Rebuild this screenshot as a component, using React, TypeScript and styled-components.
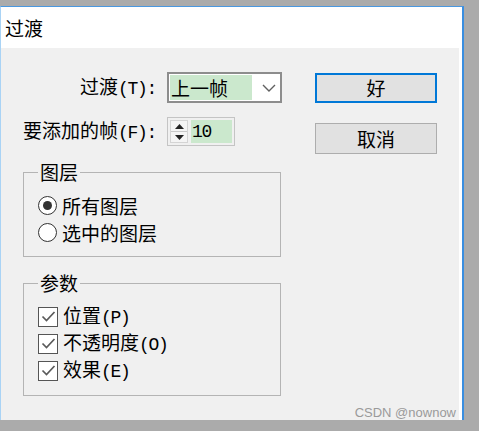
import React from 'react'
import styled, { createGlobalStyle } from 'styled-components'

const GlobalStyle = createGlobalStyle`
  html, body {
    margin: 0;
    padding: 0;
    background: #ababab;
  }
  body {
    font-family: "Noto Sans CJK SC", "Noto Sans", sans-serif;
    color: #000;
  }
`

const App = () => {
  return (
    <>
      <GlobalStyle />
      <Page>
        <Window>
          <TitleBar>过渡</TitleBar>
          <Content>
            <LeftCol>
              <FormRow h={31}>
                <Label>过渡<Ascii>(T):</Ascii></Label>
                <Select>
                  <SelectValue>上一帧</SelectValue>
                  <Chevron>
                    <svg width="14" height="8" viewBox="0 0 14 8">
                      <polyline points="1,1 7,7 13,1" fill="none" stroke="#606060" strokeWidth="1.4" />
                    </svg>
                  </Chevron>
                </Select>
              </FormRow>
              <FormRow h={29} mt={14}>
                <Label>要添加的帧<Ascii>(F):</Ascii></Label>
                <Spinner>
                  <SpinButtons>
                    <SpinHalf>
                      <svg width="9" height="5" viewBox="0 0 9 5">
                        <polygon points="0,5 4.5,0 9,5" fill="#222" />
                      </svg>
                    </SpinHalf>
                    <SpinHalf>
                      <svg width="9" height="5" viewBox="0 0 9 5">
                        <polygon points="0,0 4.5,5 9,0" fill="#222" />
                      </svg>
                    </SpinHalf>
                  </SpinButtons>
                  <SpinField><Ascii>10</Ascii></SpinField>
                </Spinner>
              </FormRow>

              <Group mt={16}>
                <Legend>图层</Legend>
                <OptionRow>
                  <Radio>
                    <Dot />
                  </Radio>
                  所有图层
                </OptionRow>
                <OptionRow>
                  <Radio />
                  选中的图层
                </OptionRow>
              </Group>

              <Group mt={16} pb={11}>
                <Legend>参数</Legend>
                <OptionRow>
                  <CheckBox>
                    <CheckMark />
                  </CheckBox>
                  <span>位置<Ascii>(P)</Ascii></span>
                </OptionRow>
                <OptionRow>
                  <CheckBox>
                    <CheckMark />
                  </CheckBox>
                  <span>不透明度<Ascii>(O)</Ascii></span>
                </OptionRow>
                <OptionRow>
                  <CheckBox>
                    <CheckMark />
                  </CheckBox>
                  <span>效果<Ascii>(E)</Ascii></span>
                </OptionRow>
              </Group>
            </LeftCol>

            <RightCol>
              <Button primary>好</Button>
              <Button>取消</Button>
            </RightCol>

            <Watermark>CSDN @nownow</Watermark>
          </Content>
        </Window>
      </Page>
    </>
  )
}

const CheckMark = () => (
  <svg width="15" height="13" viewBox="0 0 15 13">
    <polyline points="1.5,6.5 5.5,10.5 13.5,2" fill="none" stroke="#5a5a5a" strokeWidth="1.7" />
  </svg>
)

export default App

const Page = styled.div`
  height: 431px;
  padding-top: 6px;
  box-sizing: border-box;
  overflow: hidden;
`
const Window = styled.div`
  width: 464px;
  height: 414px;
  box-sizing: border-box;
  background: #fff;
  border-top: 1px solid #4a98e0;
  border-right: 2px solid #3a8ee0;
  border-left: 1px solid #a9d3f5;
  display: flex;
  flex-direction: column;
`
const TitleBar = styled.div`
  height: 41px;
  padding-left: 4px;
  display: flex;
  align-items: center;
  font-size: 19px;
  line-height: 22px;
`
const Content = styled.div`
  flex: 1;
  margin-right: 3px;
  background: #f0f0f0;
  position: relative;
  display: grid;
  grid-template-columns: 282px 122px;
  column-gap: 32px;
  align-items: start;
  align-content: start;
  padding-top: 24px;
`
const Ascii = styled.span`
  font-family: "Liberation Mono", "Courier New", monospace;
  font-size: 18px;
  letter-spacing: -1.3px;
`
const LeftCol = styled.div`
  display: flex;
  flex-direction: column;
`
const FormRow = styled.div<{ h: number; mt?: number }>`
  display: grid;
  grid-template-columns: 156px auto;
  column-gap: 10px;
  align-items: center;
  height: ${({ h }) => h}px;
  margin-top: ${({ mt }) => mt || 0}px;
`
const Label = styled.div`
  text-align: right;
  font-size: 19px;
  line-height: 20px;
  white-space: nowrap;
  padding-right: 1px;
`
const Select = styled.div`
  width: 115px;
  height: 31px;
  box-sizing: border-box;
  border: 2px solid #8d8d8d;
  background: #fff;
  padding: 1px;
  display: flex;
`
const SelectValue = styled.div`
  width: 81px;
  background: #cbe8cd;
  padding-left: 1px;
  display: flex;
  align-items: center;
  font-size: 19px;
  line-height: 20px;
`
const Chevron = styled.div`
  flex: 1;
  display: flex;
  align-items: center;
  justify-content: center;
  padding-left: 6px;
`
const Spinner = styled.div`
  width: 68px;
  height: 29px;
  box-sizing: border-box;
  border: 1px solid #c4c4c4;
  padding: 2px;
  display: flex;
  gap: 3px;
`
const SpinButtons = styled.div`
  width: 18px;
  display: flex;
  flex-direction: column;
  border: 1px solid #d4d4d4;
  box-sizing: border-box;
  background: #f4f4f4;
`
const SpinHalf = styled.div`
  flex: 1;
  display: flex;
  align-items: center;
  justify-content: center;
  & + & {
    border-top: 1px solid #c8c8c8;
  }
`
const SpinField = styled.div`
  flex: 1;
  background: #cbe8cd;
  padding-left: 1px;
  display: flex;
  align-items: center;
  line-height: 20px;
`
const Group = styled.fieldset<{ mt: number; pb?: number }>`
  margin: ${({ mt }) => mt}px 0 0 22px;
  width: 258px;
  box-sizing: border-box;
  border: 1px solid #b4b4b4;
  padding: 10px 0 ${({ pb }) => pb ?? 10}px 14px;
  min-width: 0;
`
const Legend = styled.legend`
  padding: 0 2px;
  font-size: 19px;
  line-height: 20px;
`
const OptionRow = styled.div`
  display: flex;
  align-items: center;
  gap: 5px;
  height: 27px;
  font-size: 19px;
  line-height: 20px;
`
const Radio = styled.div`
  width: 19px;
  height: 19px;
  box-sizing: border-box;
  border-radius: 50%;
  border: 1px solid #333;
  background: #fff;
  display: flex;
  align-items: center;
  justify-content: center;
  flex-shrink: 0;
`
const Dot = styled.div`
  width: 9px;
  height: 9px;
  border-radius: 50%;
  background: #333;
`
const CheckBox = styled.div`
  width: 20px;
  height: 20px;
  box-sizing: border-box;
  border: 1px solid #555;
  background: #fff;
  display: flex;
  align-items: center;
  justify-content: center;
  flex-shrink: 0;
`
const RightCol = styled.div`
  display: flex;
  flex-direction: column;
  gap: 20px;
  padding-top: 1px;
`
const Button = styled.div<{ primary?: boolean }>`
  height: ${({ primary }) => (primary ? 30 : 31)}px;
  box-sizing: border-box;
  border: ${({ primary }) => (primary ? '2px solid #0078d7' : '1px solid #adadad')};
  background: #e1e1e1;
  display: flex;
  align-items: center;
  justify-content: center;
  font-size: 19px;
  line-height: 20px;
`
const Watermark = styled.div`
  position: absolute;
  right: 3px;
  bottom: 1px;
  font-family: "Liberation Sans", Arial, sans-serif;
  font-size: 13px;
  line-height: 13px;
  color: #9a9a9a;
`
